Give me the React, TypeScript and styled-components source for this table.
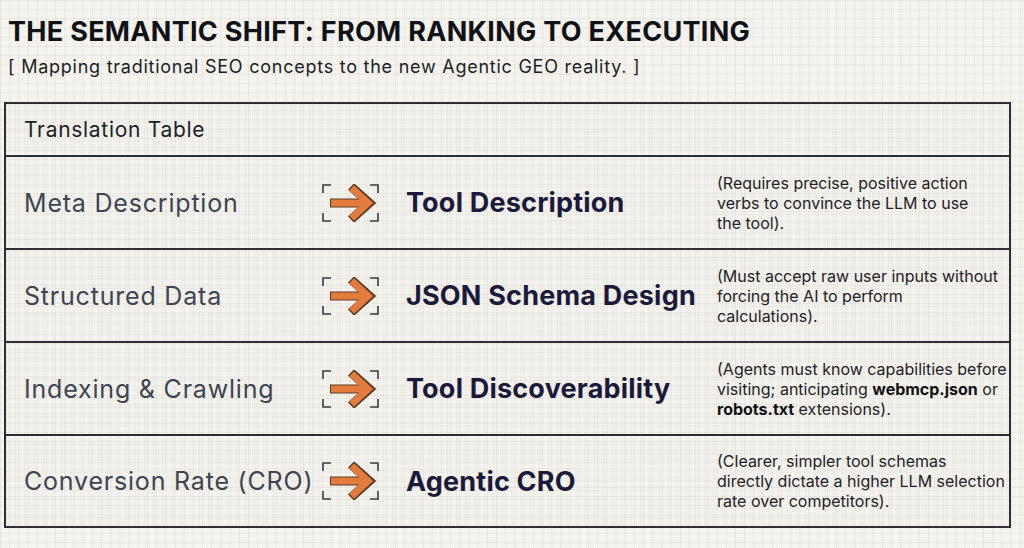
import React from 'react';
import styled, { createGlobalStyle } from 'styled-components';

const GlobalStyle = createGlobalStyle`
  html, body {
    margin: 0;
    padding: 0;
  }
  body {
    width: 1024px;
    height: 548px;
    overflow: hidden;
    font-family: 'Inter', 'Liberation Sans', sans-serif;
    background-color: #f4f3ee;
    background-image:
      linear-gradient(to right, rgba(0, 0, 0, 0.055) 1px, transparent 1px),
      linear-gradient(to bottom, rgba(0, 0, 0, 0.055) 1px, transparent 1px);
    background-size: 9.2px 9.2px;
  }
`;

const Page = styled.div`
  padding: 16px 0 0 8px;
`;

const Title = styled.h1`
  margin: 0;
  font-size: 27px;
  font-weight: 700;
  letter-spacing: 0.3px;
  line-height: 32px;
  color: #101216;
`;

const Subtitle = styled.p`
  margin: 8px 0 0 0;
  font-size: 18px;
  letter-spacing: 0.75px;
  line-height: 22px;
  color: #1c1e24;
`;

const Table = styled.div`
  margin: 24px 0 0 -4px;
  width: 1003px;
  border: 2px solid #2d2e33;
  background-image:
    linear-gradient(to right, rgba(0, 0, 0, 0.045) 1px, transparent 1px),
    linear-gradient(to bottom, rgba(0, 0, 0, 0.045) 1px, transparent 1px);
  background-size: 9.2px 9.2px;
`;

const HeaderRow = styled.div`
  height: 51px;
  display: flex;
  align-items: center;
  padding-left: 18px;
  font-size: 21px;
  letter-spacing: 0.7px;
  color: #1d1f24;
  border-bottom: 2px solid #2d2e33;
`;

const Row = styled.div<{ $last?: boolean }>`
  height: ${({ $last }) => ($last ? 90 : 91)}px;
  display: grid;
  grid-template-columns: 296px 86px 311px 1fr;
  align-items: center;
  padding-left: 18px;
  border-bottom: ${({ $last }) => ($last ? 'none' : '2px solid #2d2e33')};
`;

const OldTerm = styled.div`
  font-size: 25px;
  letter-spacing: 0.8px;
  color: #3e4450;
  white-space: nowrap;
`;

const NewTerm = styled.div`
  font-size: 27px;
  font-weight: 700;
  letter-spacing: 0.2px;
  color: #1b1a3a;
  white-space: nowrap;
`;

const Note = styled.div`
  font-size: 16px;
  line-height: 20px;
  color: #1f2126;
  white-space: nowrap;

  b {
    font-weight: 700;
    color: #111;
  }
`;

const ArrowWrap = styled.div`
  display: flex;
  align-items: center;
  margin-left: 2px;
`;

const ArrowIcon = () => (
  <svg width="58" height="38" viewBox="0 0 58 38">
    <g fill="none" stroke="#3a3b40" strokeWidth="1.6">
      <polyline points="1,9 1,1 9,1" />
      <polyline points="48,1 56,1 56,9" />
      <polyline points="1,29 1,37 9,37" />
      <polyline points="56,29 56,37 48,37" />
    </g>
    <g fill="none" strokeLinejoin="miter" strokeLinecap="butt">
      <path d="M8 19 H45 M29 2.5 L47.5 19 L29 35.5" stroke="#5a3a24" strokeWidth="9" />
      <path d="M9 19 H44 M29.6 3.9 L46.1 19 L29.6 34.1" stroke="#e27b3c" strokeWidth="7" />
    </g>
  </svg>
);

type Item = {
  from: string;
  to: string;
  note: React.ReactNode;
};

const items: Item[] = [
  {
    from: 'Meta Description',
    to: 'Tool Description',
    note: <>(Requires precise, positive action<br />verbs to convince the LLM to use<br />the tool).</>,
  },
  {
    from: 'Structured Data',
    to: 'JSON Schema Design',
    note: <>(Must accept raw user inputs without<br />forcing the AI to perform<br />calculations).</>,
  },
  {
    from: 'Indexing & Crawling',
    to: 'Tool Discoverability',
    note: (
      <>
        (Agents must know capabilities before<br />visiting; anticipating <b>webmcp.json</b> or<br />
        <b>robots.txt</b> extensions).
      </>
    ),
  },
  {
    from: 'Conversion Rate (CRO)',
    to: 'Agentic CRO',
    note: <>(Clearer, simpler tool schemas<br />directly dictate a higher LLM selection<br />rate over competitors).</>,
  },
];

export default function App() {
  return (
    <>
      <GlobalStyle />
      <Page>
        <Title>THE SEMANTIC SHIFT: FROM RANKING TO EXECUTING</Title>
        <Subtitle>[ Mapping traditional SEO concepts to the new Agentic GEO reality. ]</Subtitle>
        <Table>
          <HeaderRow>Translation Table</HeaderRow>
          {items.map((item, i) => (
            <Row key={item.from} $last={i === items.length - 1}>
              <OldTerm>{item.from}</OldTerm>
              <ArrowWrap>
                <ArrowIcon />
              </ArrowWrap>
              <NewTerm>{item.to}</NewTerm>
              <Note>{item.note}</Note>
            </Row>
          ))}
        </Table>
      </Page>
    </>
  );
}
